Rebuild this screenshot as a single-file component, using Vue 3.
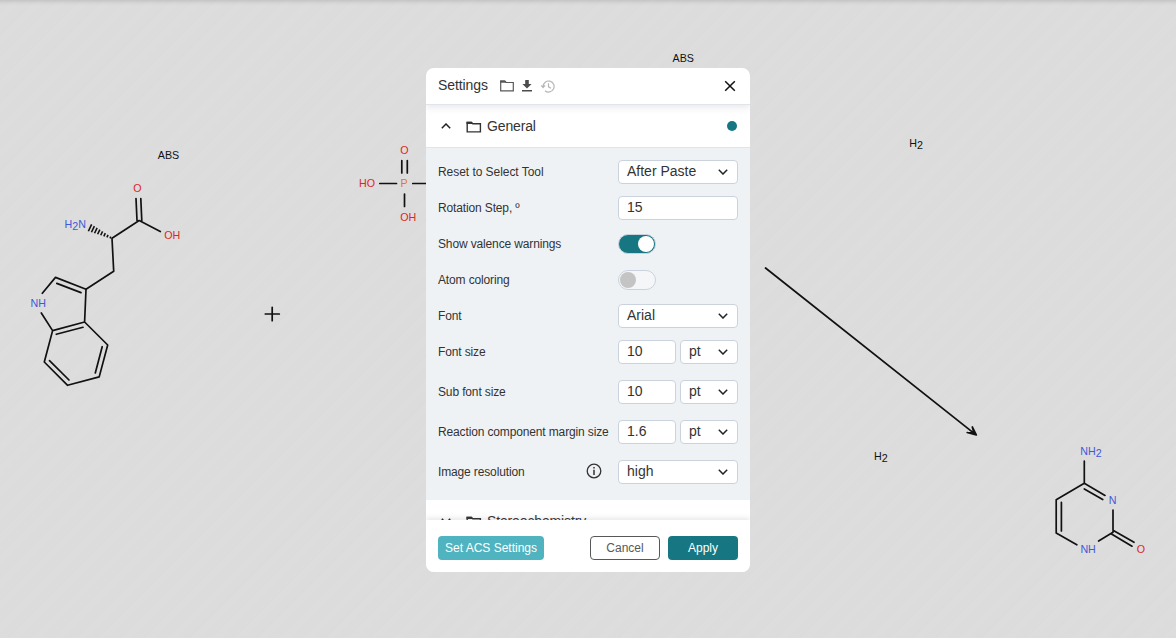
<script setup>
import { computed } from 'vue'

const rows = [
  { label: 'Reset to Select Tool', type: 'select', value: 'After Paste' },
  { label: 'Rotation Step, º', type: 'input', value: '15' },
  { label: 'Show valence warnings', type: 'switch', on: true },
  { label: 'Atom coloring', type: 'switch', on: false },
  { label: 'Font', type: 'select', value: 'Arial' },
  { label: 'Font size', type: 'measure', value: '10' },
  { label: 'Sub font size', type: 'measure', value: '10' },
  { label: 'Reaction component margin size', type: 'measure', value: '1.6' },
  { label: 'Image resolution', type: 'select', value: 'high', info: true },
]

const atoms = [
  { x: 157.8, y: 159, t: 'ABS', c: 'black' },
  { x: 672.6, y: 62, t: 'ABS', c: 'black' },
  { x: 133.2, y: 192, t: 'O', c: 'red' },
  { x: 164.2, y: 239, t: 'OH', c: 'red' },
  { x: 64.6, y: 228, t: 'H', c: 'blue', sub: '2', after: 'N' },
  { x: 30.6, y: 307, t: 'NH', c: 'blue' },
  { x: 400.2, y: 154, t: 'O', c: 'red' },
  { x: 359, y: 187, t: 'HO', c: 'red' },
  { x: 400.6, y: 187, t: 'P', c: 'orange' },
  { x: 400.2, y: 221, t: 'OH', c: 'red' },
  { x: 909.2, y: 147, t: 'H', c: 'black', sub: '2' },
  { x: 874, y: 460, t: 'H', c: 'black', sub: '2' },
  { x: 1080.2, y: 455, t: 'NH', c: 'blue', sub: '2' },
  { x: 1108.8, y: 504, t: 'N', c: 'blue' },
  { x: 1080.4, y: 553, t: 'NH', c: 'blue' },
  { x: 1136.8, y: 553, t: 'O', c: 'red' },
]

// Strokes of the hashed stereo bond, widening towards the nitrogen.
const hash = computed(() => {
  let d = ''
  for (let i = 0; i < 8; i++) {
    const k = i / 7
    const x = 110.4 - 20.4 * k
    const y = 237.5 - 9.7 * k
    const w = 0.9 + 2.9 * k
    d += `M${x - 0.43 * w} ${y + 0.9 * w}L${x + 0.43 * w} ${y - 0.9 * w}`
  }
  return d
})
</script>

<template>
  <main class="page">
    <svg class="canvas" width="1176" height="638" viewBox="0 0 1176 638">
      <g class="bonds">
        <path d="M136 198.5 137 220.5M140.8 198.5 141.8 221M160.3 231.5 139.2 220.5 112 238.3 113.7 271.3 86 289.3" />
        <path d="M42.3 293.3 55.5 277.4 86 289.3 84.6 322 52.6 330.6 41.3 313M84.6 322 107.7 345 99.2 376.9 67.6 385.3 44.3 362 52.6 330.6" />
        <path d="M56.8 283.4 81 292.6M56.3 334.3 83 327.3M102.2 346.7 95.3 373M69 380 49.5 360.6" />
        <path d="M401.8 160.5V173M407.3 160.5V173M379.8 183.5H396.5M412.8 183.5H428M404.5 194V206.5" />
        <path d="M1084.3 461V483.3L1056.2 499.7V533L1076.8 544.8M1061.4 502.3V531M1084.3 483.3 1105 495.4M1084.3 489 1102.7 499.6" />
        <path d="M1113 510V532.3L1098.6 541M1113 530.2 1134 542.3M1111.5 534 1132 546.2" />
        <path d="M765.5 268 976 434.8M972.3 427 976.3 435 967.2 432.5M972.3 427 974 433 967.2 432.5" />
        <path d="M265.3 314H279.3M272.2 307.3V320.7" />
      </g>
      <path class="hash" :d="hash" />
      <text v-for="(a, i) in atoms" :key="i" class="atom" :class="a.c" :x="a.x" :y="a.y">{{ a.t }}<tspan v-if="a.sub" dy="2">{{ a.sub }}</tspan><tspan v-if="a.after" dy="-2">{{ a.after }}</tspan></text>
    </svg>

    <section class="dialog">
      <header class="head">
        <h1>Settings</h1>
        <svg class="i-open" width="14" height="12" viewBox="0 0 14 12"><path d="M.7 10.9V1.1H4.8L6.2 2.5H13.3V10.9Z" fill="none" stroke="#585858" stroke-width="1.2" /><path d="M.2 .6H5L6.6 2.8H.2Z" fill="#585858" /></svg>
        <svg class="i-save" width="10" height="12" viewBox="0 0 10 12"><path d="M3.2 0H6.8V4H9.6L5 8.5.4 4H3.2ZM0 10H10V11.4H0Z" fill="#4c4c4c" /></svg>
        <svg class="i-reset" width="14" height="13" viewBox="0 0 14 13"><g fill="none" stroke="#b6b6b6" stroke-width="1.2"><path d="M2.1 7V6.5A5.5 5.5 0 1 1 4 10.7M.2 5.3 2.1 7.5 4.1 5.3M7.5 3.2V6.8L10 8.2" /></g></svg>
        <svg class="i-close" width="12" height="12" viewBox="0 0 12 12"><path d="M1.2 1.2 10.8 10.8M10.8 1.2 1.2 10.8" stroke="#111" stroke-width="1.5" fill="none" /></svg>
      </header>

      <div class="body">
        <div class="group">
          <svg class="chev" width="10" height="6" viewBox="0 0 10 6"><path d="M.8 5.2 5 1 9.2 5.2" /></svg>
          <svg class="folder" width="16" height="12" viewBox="0 0 16 12"><path d="M1.2 10.9V1.4H5.4L6.8 2.7H14.4V10.9Z" fill="none" stroke="#333" stroke-width="1.4" /><path d="M.5.7H5.8L7.2 3H.5Z" fill="#333" /></svg>
          <span>General</span>
          <i class="dot"></i>
        </div>
        <div class="fields">
          <div v-for="r in rows" :key="r.label" class="row" :class="{ tall: r.type === 'measure' }">
            <label>{{ r.label }}</label>
            <svg v-if="r.info" class="info" width="16" height="16" viewBox="0 0 16 16"><circle cx="8" cy="8" r="6.8" fill="none" stroke="#333" stroke-width="1.3" /><path d="M8 6.8V11.9M8 4.1V5.6" stroke="#333" stroke-width="1.5" /></svg>
            <div class="control">
              <div v-if="r.type === 'switch'" class="switch" :class="{ on: r.on }"><i></i></div>
              <div v-else class="box"><span>{{ r.value }}</span><svg v-if="r.type === 'select'" class="chev" width="10" height="6" viewBox="0 0 10 6"><path d="M.8 .8 5 5 9.2 .8" /></svg></div>
              <div v-if="r.type === 'measure'" class="box"><span>pt</span><svg class="chev" width="10" height="6" viewBox="0 0 10 6"><path d="M.8 .8 5 5 9.2 .8" /></svg></div>
            </div>
          </div>
        </div>
        <div class="group">
          <svg class="chev" width="10" height="6" viewBox="0 0 10 6"><path d="M.8 .8 5 5 9.2 .8" /></svg>
          <svg class="folder" width="16" height="12" viewBox="0 0 16 12"><path d="M1.2 10.9V1.4H5.4L6.8 2.7H14.4V10.9Z" fill="none" stroke="#333" stroke-width="1.4" /><path d="M.5.7H5.8L7.2 3H.5Z" fill="#333" /></svg>
          <span>Stereochemistry</span>
        </div>
      </div>

      <footer class="foot">
        <button class="acs">Set ACS Settings</button>
        <button class="cancel">Cancel</button>
        <button class="apply">Apply</button>
      </footer>
    </section>
  </main>
</template>

<style scoped>
.page {
  position: relative;
  width: 1176px;
  height: 638px;
  overflow: hidden;
  background:
    linear-gradient(180deg, rgba(0, 0, 0, .11), rgba(0, 0, 0, .03) 3px, transparent 6px),
    repeating-linear-gradient(135deg, #dcdcdc 0 8px, #dbdbdb 8px 9px, #dddddd 9px 16px);
  font-family: "Liberation Sans", Arial, sans-serif;
  color: #333;
}
.canvas { position: absolute; left: 0; top: 0; }
.bonds { fill: none; stroke: #111; stroke-width: 1.7; stroke-linecap: round; stroke-linejoin: round; }
.hash { stroke: #111; stroke-width: 1.6; fill: none; }
.atom { font-size: 10.7px; }
.black { fill: #111; }
.red { fill: #dc2626; }
.blue { fill: #4158d8; }
.orange { fill: #df7b17; }

.dialog {
  position: absolute;
  left: 426px;
  top: 68px;
  width: 324px;
  height: 504px;
  display: flex;
  flex-direction: column;
  border-radius: 8px;
  overflow: hidden;
  background: #fff;
}
.head {
  position: relative;
  z-index: 1;
  box-sizing: border-box;
  flex: 0 0 37px;
  display: flex;
  align-items: center;
  padding: 0 14px 0 12px;
  border-bottom: 1px solid #e1e5ea;
  box-shadow: 0 3px 6px rgba(103, 104, 132, .13);
}
h1 { margin: 0 12px 2px 0; width: 50px; white-space: nowrap; font-size: 14px; font-weight: 400; line-height: 18px; letter-spacing: -.08px; }
.i-save { margin-left: 8px; }
.i-reset { margin-left: 9px; }
.i-close { margin-left: auto; }
.body { flex: 1; min-height: 0; overflow: hidden; }
.group {
  box-sizing: border-box;
  height: 43px;
  display: flex;
  align-items: center;
  padding: 0 13px 0 15px;
  border-bottom: 1px solid #e1e5ea;
  font-size: 14px;
  letter-spacing: -.14px;
}
.group .folder { margin: 1px 5px 0 15px; }
.dot { width: 10px; height: 10px; margin-left: auto; border-radius: 50%; background: #167782; }
.chev { flex: none; fill: none; stroke: #222; stroke-width: 1.5; }
.fields {
  box-sizing: border-box;
  height: 352px;
  padding: 12px;
  background: #eff2f5;
}
.row { height: 36px; display: flex; align-items: flex-start; font-size: 12px; line-height: 24px; }
.row.tall { height: 40px; }
label { flex: 1; white-space: nowrap; letter-spacing: -.14px; }
.row:first-child label { letter-spacing: -.05px; }
.info { margin: 3px 16px 0 0; }
.control { width: 120px; height: 24px; display: flex; gap: 4px; align-items: center; }
.box {
  flex: 1;
  box-sizing: border-box;
  height: 24px;
  display: flex;
  align-items: center;
  justify-content: space-between;
  padding: 0 9px 0 8px;
  border: 1px solid #cad3dd;
  border-radius: 4px;
  background: #fff;
  font-size: 14px;
  line-height: 20px;
}
.box span { margin-top: -2px; }
.switch {
  box-sizing: border-box;
  width: 38px;
  height: 20px;
  padding: 1px;
  border: 1px solid #cad3dd;
  border-radius: 10px;
  background: #f5f6f8;
}
.switch i { display: block; width: 16px; height: 16px; border-radius: 50%; background: #c4c4c4; }
.switch.on { background: #167782; }
.switch.on i { margin-left: 18px; background: #fff; }
.foot {
  position: relative;
  flex: 0 0 52px;
  box-sizing: border-box;
  display: flex;
  align-items: center;
  padding: 4px 12px 0;
  gap: 8px;
  background: #fff;
  box-shadow: 0 -2px 5px rgba(103, 104, 132, .15);
}
button {
  box-sizing: border-box;
  width: 70px;
  height: 24px;
  padding: 0;
  border: 0;
  border-radius: 4px;
  font: 12px/22px "Liberation Sans", Arial, sans-serif;
  color: #fff;
}
.acs { width: 106px; margin-right: auto; background: #4fb3c0; }
.cancel { border: 1px solid #585858; background: #fff; color: #585858; }
.apply { background: #167782; }
</style>

<style>
body { margin: 0; overflow: hidden; }
</style>
